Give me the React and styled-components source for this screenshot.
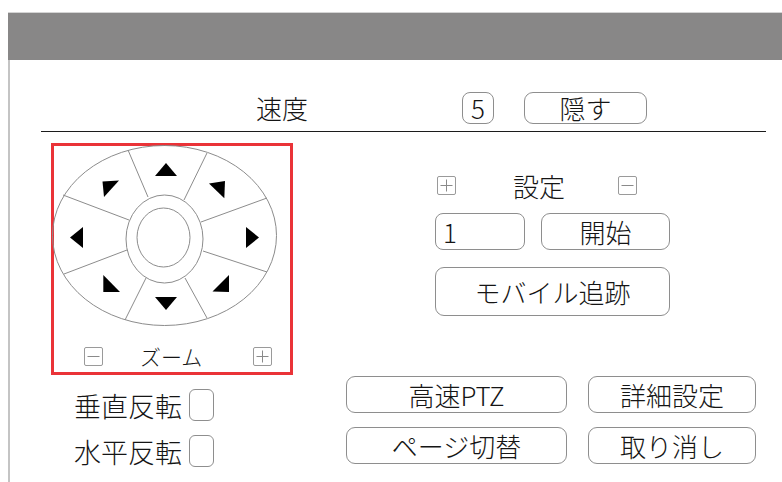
import React from 'react';
import styled, { createGlobalStyle } from 'styled-components';

const Global = createGlobalStyle`
  html, body { margin: 0; padding: 0; background: #fff; }
  body { font-family: "Noto Sans CJK JP", "Noto Sans", sans-serif; font-weight: 300; color: #151515; }
`;

const Page = styled.div`
  width: 782px;
  height: 482px;
  overflow: hidden;
  padding: 12px 0 0 8px;
  box-sizing: border-box;
  display: flex;
  flex-direction: column;
`;

const Header = styled.div`
  height: 48px;
  flex: none;
  background: #888787;
  border-top: 1px solid #d4d4d4;
  box-sizing: border-box;
`;

const Body = styled.div`
  flex: 1;
  border-left: 2px solid #c4c4c4;
  display: flex;
  flex-direction: column;
`;

const TopRow = styled.div`
  display: flex;
  align-items: center;
  height: 32px;
  margin-top: 32px;
  padding-left: 246px;
`;

const Label = styled.span`
  font-size: ${p => p.$size || 26}px;
  line-height: 1;
  white-space: nowrap;
  width: ${p => (p.$w ? `${p.$w}px` : 'auto')};
  margin-left: ${p => p.$ml || 0}px;
  flex: none;
`;

const Field = styled.div`
  box-sizing: border-box;
  width: ${p => p.$w}px;
  height: ${p => p.$h}px;
  border: 1px solid #8e8e8e;
  border-radius: 8px;
  display: flex;
  align-items: center;
  justify-content: ${p => (p.$left ? 'flex-start' : 'center')};
  padding-left: ${p => (p.$left ? 7 : 0)}px;
  font-size: 26px;
  line-height: 1;
  flex: none;
  margin-right: ${p => p.$mr || 0}px;
`;

const Button = styled.button`
  box-sizing: border-box;
  width: ${p => (p.$w ? `${p.$w}px` : '100%')};
  height: ${p => p.$h || 37}px;
  border: 1px solid #8e8e8e;
  border-radius: 9px;
  background: #fff;
  font-family: inherit;
  font-weight: 300;
  font-size: ${p => p.$size || 26}px;
  color: #151515;
  padding: 0;
  line-height: 1;
  display: flex;
  align-items: center;
  justify-content: center;
  flex: none;
  margin-left: ${p => p.$ml || 0}px;
`;

const Divider = styled.div`
  height: 1px;
  width: 725px;
  background: #1c1c1c;
  margin: 7px 0 0 31px;
`;

const Main = styled.div`
  display: grid;
  grid-template-columns: 242px 1fr;
  column-gap: 53px;
  margin: 11px 0 0 41px;
`;

const LeftCol = styled.div`
  display: flex;
  flex-direction: column;
`;

const RedBox = styled.div`
  box-sizing: border-box;
  width: 242px;
  height: 232px;
  border: 3px solid #ea3338;
  display: flex;
  flex-direction: column;
`;

const Wheel = styled.svg`
  display: block;
  overflow: visible;
  flex: none;
`;

const ZoomRow = styled.div`
  display: flex;
  align-items: center;
  height: 24px;
  margin-top: 8px;
  padding: 0 18px 0 30px;
`;

const SquareBtn = styled.span`
  box-sizing: border-box;
  width: 19px;
  height: 19px;
  border: 1px solid #9a9a9a;
  border-radius: 2px;
  display: flex;
  align-items: center;
  justify-content: center;
  flex: none;
  margin-left: ${p => (p.$auto ? 'auto' : '0')};
`;

const FlipList = styled.div`
  display: flex;
  flex-direction: column;
  gap: 14px;
  margin-top: 14px;
  padding-left: 23px;
`;

const FlipRow = styled.div`
  display: flex;
  align-items: center;
  gap: 7px;
`;

const Check = styled.span`
  box-sizing: border-box;
  width: 25px;
  height: 32px;
  border: 1px solid #8e8e8e;
  border-radius: 6px;
  flex: none;
`;

const RightCol = styled.div`
  display: flex;
  flex-direction: column;
`;

const Settings = styled.div`
  margin: 30px 0 0 89px;
  width: 235px;
  display: flex;
  flex-direction: column;
`;

const SetRow = styled.div`
  display: flex;
  align-items: center;
  height: ${p => p.$h}px;
  margin-top: ${p => p.$mt || 0}px;
  padding: ${p => p.$pad || '0'};
`;

const ButtonGrid = styled.div`
  display: grid;
  grid-template-columns: 221px 168px;
  grid-auto-rows: 37px;
  column-gap: 21px;
  row-gap: 14px;
  margin-top: 60px;
`;

const PlusMinus = ({ plus }) => (
  <svg width="13" height="13" viewBox="0 0 13 13">
    <line x1="0.5" y1="6.5" x2="12.5" y2="6.5" stroke="#8a8a8a" strokeWidth="1" />
    {plus && <line x1="6.5" y1="0.5" x2="6.5" y2="12.5" stroke="#8a8a8a" strokeWidth="1" />}
  </svg>
);

const lines = [
  [128, 150, 148, 197],
  [207, 153, 184, 200],
  [63, 195, 129, 220],
  [267, 198, 201, 222],
  [64, 274, 127, 250],
  [267, 272, 203, 251],
  [125, 320, 146, 278],
  [207, 318, 185, 278],
];

const tris = [
  '155,176 177,176 166,163',
  '155,297 177,297 166,310',
  '83,227 83,248 70,237.5',
  '246,227 246,248 259,237.5',
  '102.5,181.5 119,180.5 104,197',
  '209,183.5 225,181 224.3,198.3',
  '103.3,275 103.3,292 120,292',
  '229,275 229,292 212.5,291.5',
];

const PtzWheel = () => (
  <Wheel width="236" height="190" viewBox="54 146 236 190">
    <ellipse cx="164.5" cy="235.5" rx="112" ry="90" fill="none" stroke="#8c8c8c" strokeWidth="1" />
    <ellipse cx="164.5" cy="239" rx="38.5" ry="44" fill="none" stroke="#8c8c8c" strokeWidth="1" />
    <ellipse cx="163.5" cy="237.5" rx="26.5" ry="29.5" fill="none" stroke="#8c8c8c" strokeWidth="1" />
    {lines.map((l, i) => (
      <line key={i} x1={l[0]} y1={l[1]} x2={l[2]} y2={l[3]} stroke="#8c8c8c" strokeWidth="1" />
    ))}
    {tris.map((t, i) => (
      <polygon key={i} points={t} fill="#000" />
    ))}
  </Wheel>
);

export default function App() {
  return (
    <>
      <Global />
      <Page>
        <Header />
        <Body>
          <TopRow>
            <Label $w={206}>速度</Label>
            <Field $w={32} $h={32} $mr={30}>5</Field>
            <Button $w={123} $h={32}>隠す</Button>
          </TopRow>
          <Divider />
          <Main>
            <LeftCol>
              <RedBox>
                <PtzWheel />
                <ZoomRow>
                  <SquareBtn><PlusMinus /></SquareBtn>
                  <Label $size={21} $ml={37}>ズーム</Label>
                  <SquareBtn $auto><PlusMinus plus /></SquareBtn>
                </ZoomRow>
              </RedBox>
              <FlipList>
                <FlipRow>
                  <Label $size={27}>垂直反転</Label>
                  <Check />
                </FlipRow>
                <FlipRow>
                  <Label $size={27}>水平反転</Label>
                  <Check />
                </FlipRow>
              </FlipList>
            </LeftCol>
            <RightCol>
              <Settings>
                <SetRow $h={25} $pad="0 33px 0 2px">
                  <SquareBtn><PlusMinus plus /></SquareBtn>
                  <Label $ml={57}>設定</Label>
                  <SquareBtn $auto><PlusMinus /></SquareBtn>
                </SetRow>
                <SetRow $h={37} $mt={15}>
                  <Field $w={90} $h={37} $left>1</Field>
                  <Button $w={129} $h={37} $ml={16}>開始</Button>
                </SetRow>
                <SetRow $h={49} $mt={17}>
                  <Button $h={49}>モバイル追跡</Button>
                </SetRow>
              </Settings>
              <ButtonGrid>
                <Button>高速PTZ</Button>
                <Button>詳細設定</Button>
                <Button>ページ切替</Button>
                <Button>取り消し</Button>
              </ButtonGrid>
            </RightCol>
          </Main>
        </Body>
      </Page>
    </>
  );
}
